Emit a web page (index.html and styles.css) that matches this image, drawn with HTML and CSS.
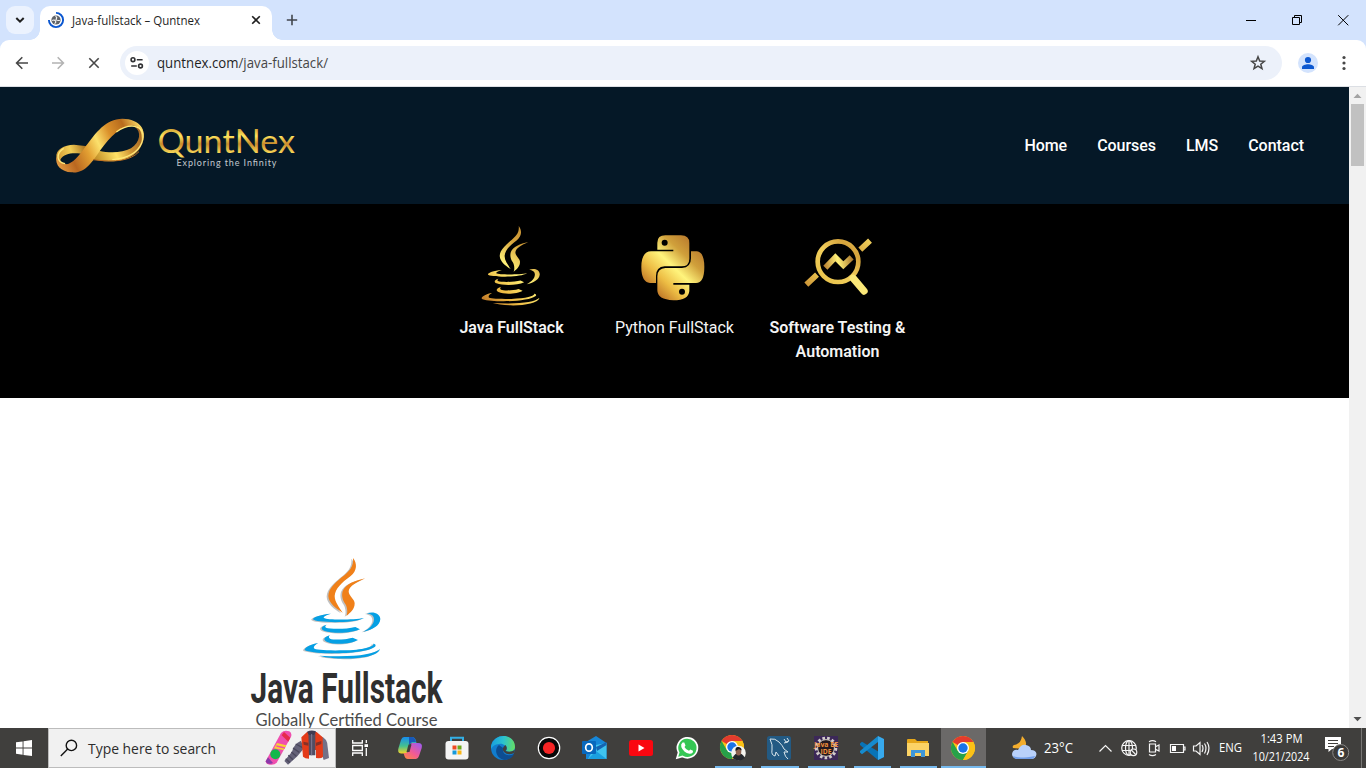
FILE: index.html
```html
<!DOCTYPE html>
<html lang="en">
<head>
<meta charset="utf-8">
<title>Java-fullstack – Quntnex</title>
<link rel="stylesheet" href="styles.css">
</head>
<body>
<svg class="defs" width="0" height="0">
  <defs>
    <linearGradient id="goldFlat" gradientUnits="userSpaceOnUse" x1="220" y1="320" x2="450" y2="30"><stop offset="0" stop-color="#b56a22"/><stop offset=".25" stop-color="#efbd45"/><stop offset=".48" stop-color="#fff178"/><stop offset=".72" stop-color="#d5a13a"/><stop offset="1" stop-color="#b98530"/></linearGradient>
    <linearGradient id="goldText" gradientUnits="userSpaceOnUse" x1="0" y1="10" x2="0" y2="36"><stop offset="0" stop-color="#c8962b"/><stop offset=".35" stop-color="#ffe45d"/><stop offset=".65" stop-color="#c98c2c"/><stop offset="1" stop-color="#f8d758"/></linearGradient>
    <g id="flames">
      <path d="M369 24C382 40 382 62 362 78C335 98 316 115 314 138C314 156 328 172 338 188C318 175 296 160 295 138C296 115 315 100 335 82C358 64 372 50 369 24Z"/>
      <path d="M406 85C380 97 358 108 356 124C356 138 374 148 374 160C374 178 362 188 349 198C354 188 352 172 346 162C338 150 334 138 338 124C346 102 375 92 406 85Z"/>
    </g>
    <g id="cup">
      <path d="M303 191C270 193 247 203 249 208C255 218 370 222 402 204C370 210 290 210 282 204C278 200 290 195 303 191Z"/>
      <path d="M410 190C430 183 450 190 451 207C450 228 425 240 400 245C420 235 432 222 432 208C432 196 422 192 410 190Z"/>
      <path d="M290 224C275 228 270 237 282 242C310 252 365 250 390 238L376 231C350 238 300 238 288 233C284 230 286 227 290 224Z"/>
      <path d="M300 256C285 260 276 268 290 275C315 286 365 282 384 270L368 263C345 270 310 270 300 266C295 262 296 259 300 256Z"/>
      <path d="M265 279C240 282 215 298 228 302C270 315 410 312 435 290C440 285 434 281 430 281C432 290 400 300 340 301C290 302 255 300 252 295C250 288 258 283 265 279Z"/>
      <path d="M450 297C430 315 370 322 268 317C310 330 440 332 450 297Z"/>
    </g>
    <g id="chrome">
      <circle cx="12" cy="12" r="12" fill="#fbc116"/>
      <path d="M12 12L1.600 6A12 12 0 0 1 22.400 6Z" fill="#e33b2e"/>
      <path d="M1.600 6L6.800 15L12 12L17.200 15L12 24A12 12 0 0 1 1.600 6Z" fill="#27a149"/>
      <path d="M12 6H22.400A12 12 0 0 1 12 24L17.200 15Z" fill="#fbc116"/>
      <circle cx="12" cy="12" r="6" fill="#fff"/><circle cx="12" cy="12" r="4.700" fill="#1a73e8"/>
    </g>
  </defs>
</svg>

<div class="tabstrip">
  <div class="tab-search"><svg width="28" height="28" fill="none" stroke="#1f1f1f" stroke-width="2"><path d="M10.300 12L14 15.700L17.700 12"/></svg></div>
  <div class="tab">
    <svg width="16" height="16"><path d="M8 .9A7.100 7.100 0 1 1 .9 8" fill="none" stroke="#0b57d0" stroke-width="1.900"/><circle cx="8" cy="8" r="4.600" fill="#5f6368"/><path d="M4.200 8.400Q6.500 7.500 7.500 9T6.500 11.500M7.400 4.500Q9.500 5 8.300 6.800T11.800 8.500" stroke="#fff" fill="none" stroke-width="1.100"/></svg>
    <svg class="tab-title" width="130" height="20"><text x="0" y="15" textLength="128" lengthAdjust="spacingAndGlyphs">Java-fullstack – Quntnex</text></svg>
    <svg class="tab-close" width="10" height="10" stroke="#1f1f1f" stroke-width="1.600"><path d="M1.200 1.200L8.800 8.800M8.800 1.200L1.200 8.800"/></svg>
  </div>
  <svg class="new-tab" width="12" height="12" stroke="#41464d" stroke-width="1.600"><path d="M6 .8V11.200M.8 6H11.200"/></svg>
  <svg class="win-controls" width="120" height="40" fill="none" stroke="#000" stroke-width="1"><path d="M10 20.500H20"/><path d="M56.500 17.500H63.500V24.500H56.500ZM58.500 17.500V15.500H65.500V22.500H63.500"/><path d="M102.200 15.200L112.300 25.300M112.300 15.200L102.200 25.300"/></svg>
</div>

<div class="toolbar">
  <svg class="nav-buttons" width="104" height="46" fill="none" stroke="#474747" stroke-width="1.600"><path d="M28 23H17M22.300 17.300L16.600 23L22.300 28.700"/><path d="M52 23H63M57.700 17.300L63.400 23L57.700 28.700" stroke="#b3b3b3"/><path d="M89.300 18.300L98.700 27.700M98.700 18.300L89.300 27.700"/></svg>
  <div class="omnibox">
    <div class="site-info"><svg width="14" height="12" fill="none" stroke="#303134" stroke-width="1.600"><circle cx="3" cy="2.700" r="1.900"/><path d="M6.800 2.700H12.600M1.200 9H6.800"/><circle cx="10.500" cy="9" r="1.900"/></svg></div>
    <svg class="url" width="180" height="24"><text x="0" y="17" textLength="171" lengthAdjust="spacingAndGlyphs">quntnex.com<tspan fill="#474747">/java-fullstack/</tspan></text></svg>
    <svg class="star" width="16" height="16" fill="none" stroke="#474747" stroke-width="1.500"><path d="M8 1.800L9.700 6L14.300 6.300L10.800 9.200L12 13.700L8 11.200L4 13.700L5.200 9.200L1.700 6.300L6.300 6Z"/></svg>
  </div>
  <svg class="profile" width="20" height="20"><circle cx="10" cy="10" r="10" fill="#d3e3fd"/><g fill="#0b57d0"><circle cx="10" cy="7" r="3.100"/><path d="M4 16V14.300C4 12.300 7.500 11.300 10 11.300S16 12.300 16 14.300V16Z"/></g></svg>
  <svg class="menu" width="4" height="16" fill="#474747"><circle cx="2" cy="2.500" r="1.600"/><circle cx="2" cy="8" r="1.600"/><circle cx="2" cy="13.500" r="1.600"/></svg>
</div>

<div class="viewport">
  <main class="page">
    <header class="site-header">
      <div class="logo">
        <svg width="92" height="58" viewBox="45 52 276 174">
          <defs>
            <linearGradient id="rib" gradientUnits="userSpaceOnUse" x1="55" y1="200" x2="310" y2="80"><stop offset="0" stop-color="#e69c42"/><stop offset=".18" stop-color="#b96720"/><stop offset=".36" stop-color="#e3a032"/><stop offset=".5" stop-color="#fbe06c"/><stop offset=".65" stop-color="#db912b"/><stop offset=".82" stop-color="#b76b1d"/><stop offset="1" stop-color="#ffe16a"/></linearGradient>
            <linearGradient id="loop" gradientUnits="userSpaceOnUse" x1="160" y1="175" x2="315" y2="100"><stop offset="0" stop-color="#b98420"/><stop offset=".4" stop-color="#ffe265"/><stop offset=".65" stop-color="#cf9434"/><stop offset="1" stop-color="#9c5e20"/></linearGradient>
            <linearGradient id="loopLeft" gradientUnits="userSpaceOnUse" x1="52" y1="170" x2="140" y2="140"><stop offset="0" stop-color="#d39a35"/><stop offset=".5" stop-color="#f3cf57"/><stop offset="1" stop-color="#a86f20"/></linearGradient>
          </defs>
          <path fill="url(#loop)" d="M160 178C200 190 270 190 300 150C318 125 320 95 303 78L288 82C307 95 305 128 276 146C250 160 210 160 180 153Z"/>
          <path fill="url(#loopLeft)" d="M52 172C50 150 75 135 105 135L145 140L126 162C100 158 74 162 65 178C62 185 70 190 80 192C62 195 54 185 52 172Z"/>
          <path fill="url(#rib)" d="M98 218C140 222 160 185 185 150C215 110 245 76 285 78C300 80 310 95 308 125C326 95 304 57 250 57C200 57 170 100 140 140C120 170 95 197 80 193C65 190 58 180 52 172C48 195 65 217 98 218Z"/>
          <path fill="none" stroke="#ffe87a" stroke-width="4" d="M232 97C252 82 268 78 286 80C310 84 318 105 308 130C296 160 262 176 220 180M78 192C52 187 50 162 74 146"/>
          <path fill="none" stroke="#be6f20" stroke-width="3" d="M300 156C275 183 230 189 162 180"/>
        </svg>
        <svg class="wordmark" width="144" height="58">
          <text class="brand" x="1.500" y="35.500" textLength="137.500" lengthAdjust="spacingAndGlyphs">QuntNex</text>
          <text class="tagline" x="20.500" y="49" textLength="100" lengthAdjust="spacing">Exploring the Infinity</text>
        </svg>
      </div>
      <nav class="site-nav"><a>Home</a><a>Courses</a><a>LMS</a><a>Contact</a></nav>
    </header>

    <section class="courses">
      <div class="course">
        <div class="course-icon java"><svg width="58" height="80" viewBox="222 24 226 304" preserveAspectRatio="none" fill="url(#goldFlat)"><use href="#flames"/><use href="#cup"/></svg></div>
        <b>Java FullStack</b>
      </div>
      <div class="course">
        <div class="course-icon python"><svg width="64" height="66" viewBox="35 74 192 198">
          <defs><linearGradient id="pyg" gradientUnits="userSpaceOnUse" x1="65" y1="240" x2="200" y2="100"><stop offset="0" stop-color="#bd7326"/><stop offset=".25" stop-color="#edbd44"/><stop offset=".5" stop-color="#fff47c"/><stop offset=".75" stop-color="#d0a03b"/><stop offset="1" stop-color="#b97a2d"/></linearGradient></defs>
          <g fill="url(#pyg)"><path d="M84 118V97Q84 75 108 75H155Q180 75 180 98V145Q180 168 156 168H106Q80 170 80 197V218H62Q36 215 36 170Q36 124 65 123H132V118Z"/><path d="M185 123H203Q225 126 225 170Q225 218 200 218H132V223H180V242Q178 270 132 270Q84 268 84 240V198Q85 174 108 173H158Q185 172 185 144Z"/></g>
          <g fill="#000"><circle cx="106" cy="97" r="9"/><circle cx="158" cy="244" r="9"/></g>
        </svg></div>
        <span>Python FullStack</span>
      </div>
      <div class="course">
        <div class="course-icon testing"><svg width="68" height="58" viewBox="525 85 204 174">
          <defs><linearGradient id="tg" gradientUnits="userSpaceOnUse" x1="535" y1="240" x2="700" y2="70"><stop offset="0" stop-color="#c98f36"/><stop offset=".25" stop-color="#eac44e"/><stop offset=".5" stop-color="#f2cf5c"/><stop offset=".75" stop-color="#d5a33c"/><stop offset="1" stop-color="#f0cf5c"/></linearGradient>
          <linearGradient id="zig" gradientUnits="userSpaceOnUse" x1="585" y1="170" x2="672" y2="150"><stop offset="0" stop-color="#b98030"/><stop offset=".5" stop-color="#fff078"/><stop offset="1" stop-color="#a8752c"/></linearGradient></defs>
          <g fill="none" stroke="url(#tg)"><circle cx="627" cy="156" r="61" stroke-width="14"/><path stroke-width="17" d="M532 225L564 195M694 120L723 93"/></g><path fill="none" stroke="url(#zig)" stroke-width="17" d="M589 174L619 143L643 167L668 143"/><path stroke="#fbe878" stroke-width="22" stroke-linecap="round" d="M673 206L705 244"/>
        </svg></div>
        <b>Software Testing &amp;<br>Automation</b>
      </div>
    </section>

    <section class="hero">
      <svg width="220" height="180" viewBox="0 0 220 180">
        <g transform="scale(.33333) translate(-30 0)">
          <g fill="#8f8f8f" opacity=".55" transform="translate(-5 2)"><use href="#flames"/><use href="#cup"/></g>
          <use href="#flames" fill="#f08019"/><use href="#cup" fill="#06a0e4"/>
        </g>
        <text class="hero-title" x="10.500" y="153" textLength="192" lengthAdjust="spacingAndGlyphs">Java Fullstack</text>
        <text class="hero-sub" x="15.500" y="176" textLength="182" lengthAdjust="spacingAndGlyphs">Globally Certified Course</text>
      </svg>
    </section>
  </main>
  <div class="scrollbar">
    <svg width="17" height="17"><path d="M4.500 11L8.500 6.800L12.500 11Z" fill="#a3a3a3"/></svg>
    <div class="thumb"></div>
    <svg class="down" width="17" height="17"><path d="M4.500 6L8.500 10.200L12.500 6Z" fill="#505050"/></svg>
  </div>
</div>

<footer class="taskbar">
  <div class="start"><svg width="16" height="16" fill="#fff"><path d="M0 2.300L6.600 1.400V7.600H0ZM7.500 1.200L16 0V7.600H7.500ZM0 8.500H6.600V14.700L0 13.800ZM7.500 8.500H16V16L7.500 14.900Z"/></svg></div>
  <div class="search">
    <svg width="18" height="18" fill="none" stroke="#111" stroke-width="1.400"><circle cx="11.400" cy="6.400" r="5.200"/><path d="M7.700 10.100L.8 17"/></svg>
    <svg class="search-label" width="132" height="28"><text x="0" y="20" textLength="128" lengthAdjust="spacingAndGlyphs">Type here to search</text></svg>
    <svg class="search-art" width="66" height="36" viewBox="0 0 198 108">
      <path d="M2 94L48 9Q58 -2 73 4Q82 10 78 20L35 98Q28 106 14 104Q2 102 2 94Z" fill="#ef4fae"/><path d="M50 16L70 35L76 23L57 6Z" fill="#e52b4b"/><path d="M27 55L56 60L64 46L36 39Z" fill="#f9d233"/><path d="M34 48L60 54" stroke="#ef4fae" stroke-width="4"/><circle cx="31" cy="73" r="15" fill="#12b84b"/><path d="M2 94L9 82L24 99Q6 106 2 94Z" fill="#8a3aaa"/>
      <path d="M108 32Q85 43 81 65L58 93L69 104L97 79L117 55Z" fill="#646178"/><path d="M62 86L75 98M70 76L84 89M79 66L94 79M84 54L103 67M92 42L113 53" stroke="#4a475c" stroke-width="4"/>
      <path d="M165 18Q188 24 188 51L192 84L176 90L163 51Z" fill="#737087"/><path d="M109 22L126 6H155L173 22L174 80Q170 86 153 84V60H132V86Q120 86 114 80Z" fill="#e43b19"/><path d="M130 5H151V76H132Z" fill="#514d63"/><path d="M126 5Q139 -1 153 4L147 15H132Z" fill="#403b51"/><path d="M140 12V76" stroke="#817b94" stroke-width="3"/><path d="M115 35L130 38V47L116 44ZM153 38L169 33V42L153 48Z" fill="#873027"/>
    </svg>
  </div>
  <div class="cell taskview"><svg width="18" height="18" fill="none" stroke="#fff" stroke-width="1.300"><path d="M1.700 1V4H11.300V1M1.700 17V14H11.300V17M1.700 6.500H11.300V11.500H1.700ZM15.300 1V4M15.300 9V17"/><path d="M13.500 5.200H17V8H13.500Z" fill="#fff" stroke="none"/></svg></div>
  <div class="apps">
    <div class="cell"><svg width="24" height="24"><defs><linearGradient id="cp1" x1="0" y1="0" x2="0" y2="1"><stop stop-color="#168df0"/><stop offset=".55" stop-color="#45c18e"/><stop offset="1" stop-color="#f7d326"/></linearGradient><linearGradient id="cp2" x1="0" y1="1" x2=".8" y2="0"><stop stop-color="#ff8b3a"/><stop offset=".5" stop-color="#f05a96"/><stop offset="1" stop-color="#a45be9"/></linearGradient></defs><path d="M6 1H14Q17 1 18 5L18.500 7H14Q12 7 11 10L9.500 16Q9 17.500 7 17.500H3Q-1 17 .5 12L3 4Q4 1 6 1Z" fill="url(#cp1)"/><path d="M18 23H10Q7 23 6 18.500L5.500 17H8Q10 17 11 14L13.500 7H20Q25 7 23.700 12L21 20Q20 23 18 23Z" fill="url(#cp2)"/><path d="M11 1H14Q17 1 18 6H14Q12 7 11 10Z" fill="#1858b9"/><path d="M10.500 8.500H13.500L11.500 16H8.500Z" fill="#403f3d"/></svg></div>
    <div class="cell"><svg width="24" height="24"><path d="M6 6V1.700H18V6" fill="none" stroke="#33afe5" stroke-width="2"/><rect x=".5" y="5" width="23" height="18.500" rx="3" fill="#f4f4f4"/><path d="M7.500 9.500H11.500V13.500H7.500Z" fill="#ef4a23"/><path d="M12.500 9.500H16.500V13.500H12.500Z" fill="#6ca91c"/><path d="M7.500 14.500H11.500V18.500H7.500Z" fill="#1599da"/><path d="M12.500 14.500H16.500V18.500H12.500Z" fill="#f8b516"/></svg></div>
    <div class="cell"><svg width="24" height="24"><defs><linearGradient id="ed" x1="0" y1=".4" x2="1" y2=".5"><stop stop-color="#189de0"/><stop offset=".5" stop-color="#2bc3cf"/><stop offset="1" stop-color="#64dc65"/></linearGradient></defs><circle cx="12" cy="12" r="12" fill="#117dce"/><path d="M0 10C3-4 24-3 24 11C24 15 19 17 15 15C18 12 13 7 8 8C4 8 1 11 0 13Z" fill="url(#ed)"/><path d="M8 9C2 14 6 23 14 24C18 24 22 21 23 18C16 21 11 18 12 12Z" fill="#0d4d91"/><path d="M14.500 9Q10 12 13 16Q17 20 23 17L24 14Q19 17 14.500 15Q17 12 14.500 9Z" fill="#403f3d"/></svg></div>
    <div class="cell"><svg width="24" height="24"><circle cx="12" cy="12" r="10.700" fill="#080808" stroke="#fff" stroke-width="1.200"/><circle cx="12" cy="12" r="6.100" fill="#f52424"/></svg></div>
    <div class="cell"><svg width="25" height="24"><path d="M4 6L14 0L24.500 7V23H4Z" fill="#1687d9"/><path d="M14 9L24.500 7V23H6Z" fill="#3fc4ef"/><path d="M14 15L24.500 23H6Z" fill="#1aa0e0"/><path d="M14 11L24.500 6V9L15 15Z" fill="#1464b3"/><rect y="5" width="14" height="13" rx="1" fill="#0868bd"/><ellipse cx="7" cy="11.500" rx="3.300" ry="3.700" fill="none" stroke="#fff" stroke-width="1.700"/></svg></div>
    <div class="cell"><svg width="24" height="24"><rect y="4" width="24" height="16" rx="2.500" fill="#fa0710"/><path d="M9.500 8.500L15.500 12L9.500 15.500Z" fill="#fff"/></svg></div>
    <div class="cell"><svg width="24" height="24"><path d="M2 22L3.600 16.500A10 10 0 1 1 7.500 20.500Z" fill="#34c654" stroke="#fff" stroke-width="1.700"/><path d="M7.500 6.500L9.300 6.500L10.500 9.500L9.500 11Q11 14 14 14.800L15.300 13.500L18 14.800Q18.300 18 14.500 17.800Q8.500 16.500 6.300 11Q5.500 8 7.500 6.500Z" fill="#fff"/></svg></div>
    <div class="cell running"><svg width="26" height="26"><use href="#chrome" x="0" y="0"/><circle cx="18.500" cy="18" r="7.300" fill="#f4f4ef"/><path d="M12.500 23Q15 18 18.500 18T25 23Q19 28 12.500 23Z" fill="#25282d"/><ellipse cx="18.500" cy="16.500" rx="2.800" ry="4" fill="#8d6250"/><path d="M15.500 16Q15 11.500 18.500 12T21.500 15.500L19 14Z" fill="#17191d"/></svg></div>
    <div class="cell running"><svg width="24" height="24"><rect width="24" height="24" rx="2.500" fill="#235a83"/><path d="M3 3Q8 2 12 6T17 13L21 16L17 16Q18 21 21 23M3 3Q6 9 5 14T8 20L9 16L12 20M17 3L19 6L22 5L20 2M21 6L17 7" fill="none" stroke="#d9e6ec" stroke-width="1"/></svg></div>
    <div class="cell running"><svg width="24" height="24"><rect width="24" height="24" fill="#3c2858"/><circle cx="12" cy="12" r="9.800" fill="none" stroke="#d3cdca" stroke-width="3" stroke-dasharray="2.600 2.100"/><circle cx="12" cy="12" r="8.400" fill="#241a20" stroke="#d6d0c9"/><text class="ide" x="0" y="11" textLength="24" lengthAdjust="spacingAndGlyphs">Java EE</text><text class="ide" x="6.500" y="18" textLength="11" lengthAdjust="spacingAndGlyphs">IDE</text></svg></div>
    <div class="cell running"><svg width="24" height="24"><path d="M0 7.500L2 5.800L24 19V21L18 24L0 9Z" fill="#0873b6"/><path d="M0 16.500L2 18.200L18 6V0L0 15Z" fill="#168bce"/><path d="M18 0L24 3V21L18 24Z" fill="#37a9ed"/></svg></div>
    <div class="cell running"><svg width="22" height="20"><path d="M0 2Q0 1 1 1H8L10 3H21V18H0Z" fill="#e6a719"/><path d="M0 5H22V18H0Z" fill="#fcd365"/><path d="M4 19V12H18V19H14V15H8V19Z" fill="#3f97d8"/></svg></div>
    <div class="cell active"><svg width="24" height="24"><use href="#chrome"/></svg></div>
  </div>
  <div class="weather">
    <svg width="25" height="24"><path d="M10 0Q17 7 12 13L1 12Q0 10 2 9Q9 8 10 0Z" fill="#f3ad2d"/><path d="M5 23Q0 22 0 18Q1 13 6 14Q9 8 14 9Q19 10 19 14Q24 14 24.500 18Q24 23 19 23Z" fill="#b9d1fa"/><path d="M1 20Q6 23 23 20Q22 23 19 23H5Q2 23 1 20Z" fill="#729fea"/></svg>
    <svg width="32" height="24"><text class="temp" x="1" y="17" textLength="29" lengthAdjust="spacingAndGlyphs">23°C</text></svg>
  </div>
  <svg class="tray" width="114" height="40" fill="none" stroke="#f5f5f5" stroke-width="1.200">
    <path d="M1.500 23.500L7.500 17.500L13.500 23.500"/>
    <circle cx="31" cy="20" r="7.300"/><ellipse cx="31" cy="20" rx="3.500" ry="7.300"/><path d="M24 17.500H38M24 22.500H32M31 13V27"/><circle cx="35.500" cy="24.300" r="3.300" fill="#403f3d"/><path d="M33.300 22L37.800 26.600"/>
    <path d="M51.500 16H57.500V24H51.500ZM57.500 18.700L61 17V23L57.500 21.300M51 13.800Q54.500 11.500 58 13.800M51 26.500Q54.500 28.800 58 26.500"/>
    <path d="M72.500 16.500H85.500V24.500H72.500ZM85.500 19H87V22H85.500"/><path d="M74 18H78V23H74Z" fill="#fff" stroke="none"/>
    <path d="M95.500 18H98L102 14.500V26.500L98 23H95.500ZM104 17Q106 20 104 24M106.500 15.500Q109.500 20 106.500 25.500M109 14Q113 20 109 27"/>
  </svg>
  <svg class="clock" width="98" height="40">
    <text x="6" y="24" textLength="23" lengthAdjust="spacingAndGlyphs">ENG</text>
    <text x="47.500" y="15" textLength="42" lengthAdjust="spacingAndGlyphs">1:43 PM</text>
    <text x="39.500" y="33" textLength="57" lengthAdjust="spacingAndGlyphs">10/21/2024</text>
  </svg>
  <svg class="notify" width="25" height="26"><path d="M0 0H16V12H7L3.500 15V12H0Z" fill="#fff"/><path d="M3 3.500H13M3 6.500H13M3 9.500H9" stroke="#403f3d"/><circle cx="15.700" cy="15.500" r="8" fill="#3b3a38" stroke="#8a8987"/><text x="12.500" y="20">6</text></svg>
  <div class="show-desktop"></div>
</footer>
</body>
</html>
```
FILE: styles.css
```css
* { box-sizing: border-box; }
body { margin: 0; width: 1366px; height: 768px; overflow: hidden; display: flex; flex-direction: column; font-family: Roboto, sans-serif; background: #fff; }
svg { display: block; flex: none; overflow: visible; }
.defs { position: absolute; }

.tabstrip { height: 40px; background: #d3e3fd; display: flex; flex: none; padding-left: 6px; }
.tab-search { width: 28px; height: 28px; margin-top: 6px; border-radius: 9px; background: #ebf2fe; }
.tab { width: 232px; height: 34px; margin: 6px 0 0 6px; background: #fff; border-radius: 10px 10px 0 0; display: flex; align-items: center; padding: 0 11px 6px 8px; position: relative; }
.tab::before, .tab::after { content: ""; position: absolute; bottom: 0; width: 10px; height: 10px; }
.tab::before { left: -10px; background: radial-gradient(circle at 0 0, transparent 9.5px, #fff 10px); }
.tab::after { right: -10px; background: radial-gradient(circle at 100% 0, transparent 9.5px, #fff 10px); }
.tab-title { margin-left: 8px; }
.tab-title text { font: 12px "Open Sans", sans-serif; fill: #1f1f1f; }
.tab-close { margin-left: auto; }
.new-tab { margin: 14px 0 0 14px; }
.win-controls { margin-left: auto; margin-right: 10px; width: 120px; }

.toolbar { height: 47px; flex: none; display: flex; align-items: center; border-bottom: 1px solid #dcdfe4; box-shadow: 0 -9px 0 0 #d3e3fd; border-radius: 9px 9px 0 0; background: #fff; clip-path: inset(0); }
.nav-buttons { margin-right: 16px; }
.omnibox { width: 1162px; height: 34px; border-radius: 17px; background: #ecf1fa; display: flex; align-items: center; padding: 0 16px 0 5px; }
.site-info { width: 24px; height: 24px; border-radius: 50%; background: #fff; display: flex; align-items: center; justify-content: center; }
.url { margin-left: 8px; }
.url text { font: 14px "Open Sans", sans-serif; fill: #1f1f1f; }
.star { margin-left: auto; }
.profile { margin-left: 16px; }
.menu { margin-left: 24px; }
body { background: linear-gradient(#d3e3fd 0 60px, #fff 60px); }

.viewport { height: 641px; display: flex; flex: none; background: #fff; overflow: hidden; }
.page { width: 1349px; overflow: hidden; }
.site-header { height: 117px; background: #051827; display: flex; align-items: center; justify-content: space-between; padding: 0 45px 0 54px; }
.logo { display: flex; }
.wordmark { margin-left: 10px; }
.brand { font: 33.5px Lato, sans-serif; fill: url(#goldText); }
.tagline { font: 9px Lato, sans-serif; fill: #c3c9cf; }
.site-nav { display: flex; gap: 30px; font-size: 16px; font-weight: 500; color: #fff; letter-spacing: -.04px; }
.courses { height: 194px; background: #000; display: flex; padding-left: 430px; }
.course { width: 163px; color: #f4f4f4; font-size: 16px; line-height: 24px; text-align: center; padding-top: 22px; }
.course b { font-weight: 600; }
.course-icon { height: 90px; display: flex; justify-content: center; align-items: flex-start; }
.java { padding-right: 4px; }
.python { padding: 9px 3px 0 0; }
.testing { padding: 12px 0 0 1px; }
.hero { padding: 152px 0 0 240px; }
.hero-title { font: bold 43px Roboto, sans-serif; fill: #2f2f2f; }
.hero-sub { font: 16.5px Lato, sans-serif; fill: #4b4b4b; }
.scrollbar { width: 17px; background: #f1f1f1; display: flex; flex-direction: column; align-items: center; }
.thumb { width: 13px; height: 62px; background: #c1c1c1; }
.down { margin-top: auto; }

.taskbar { height: 40px; flex: none; background: #403f3d; display: flex; align-items: center; position: relative; }
.start { width: 48px; padding-left: 16px; }
.search { width: 288px; height: 40px; background: #f1f1f1; border: 1px solid #bcbcbc; display: flex; align-items: center; padding-left: 11px; }
.search-label { margin-left: 10px; }
.search-label text { font: 15px "Open Sans", sans-serif; fill: #2d2d2d; }
.search-art { margin-left: 45px; }
.cell { width: 46.15px; height: 40px; display: flex; align-items: center; justify-content: center; position: relative; flex: none; }
.taskview { width: 48px; margin-right: 3.3px; }
.apps { display: flex; }
.running::after, .active::after { content: ""; position: absolute; left: 5px; right: 4px; bottom: 0; height: 2px; background: #76b9ed; }
.active { background: #6b6968; width: 45px; }
.active::after { left: 0; right: 0; }
.weather { display: flex; align-items: center; margin-left: 26px; }
.weather svg + svg { margin-left: 6px; }
.temp { font: 14px "Open Sans", sans-serif; fill: #fff; }
.tray { margin-left: 23px; }
.clock text { font: 12px "Open Sans", sans-serif; fill: #fff; }
.clock { margin-left: 1px; }
.notify { margin-left: 14px; margin-top: 4px; }
.notify text { font: bold 12px "Open Sans", sans-serif; fill: #fff; }
.ide { font: bold 6.5px "Open Sans", sans-serif; fill: #f0913c; }
.show-desktop { width: 5px; height: 40px; border-left: 1px solid #777674; margin-left: auto; }
```
